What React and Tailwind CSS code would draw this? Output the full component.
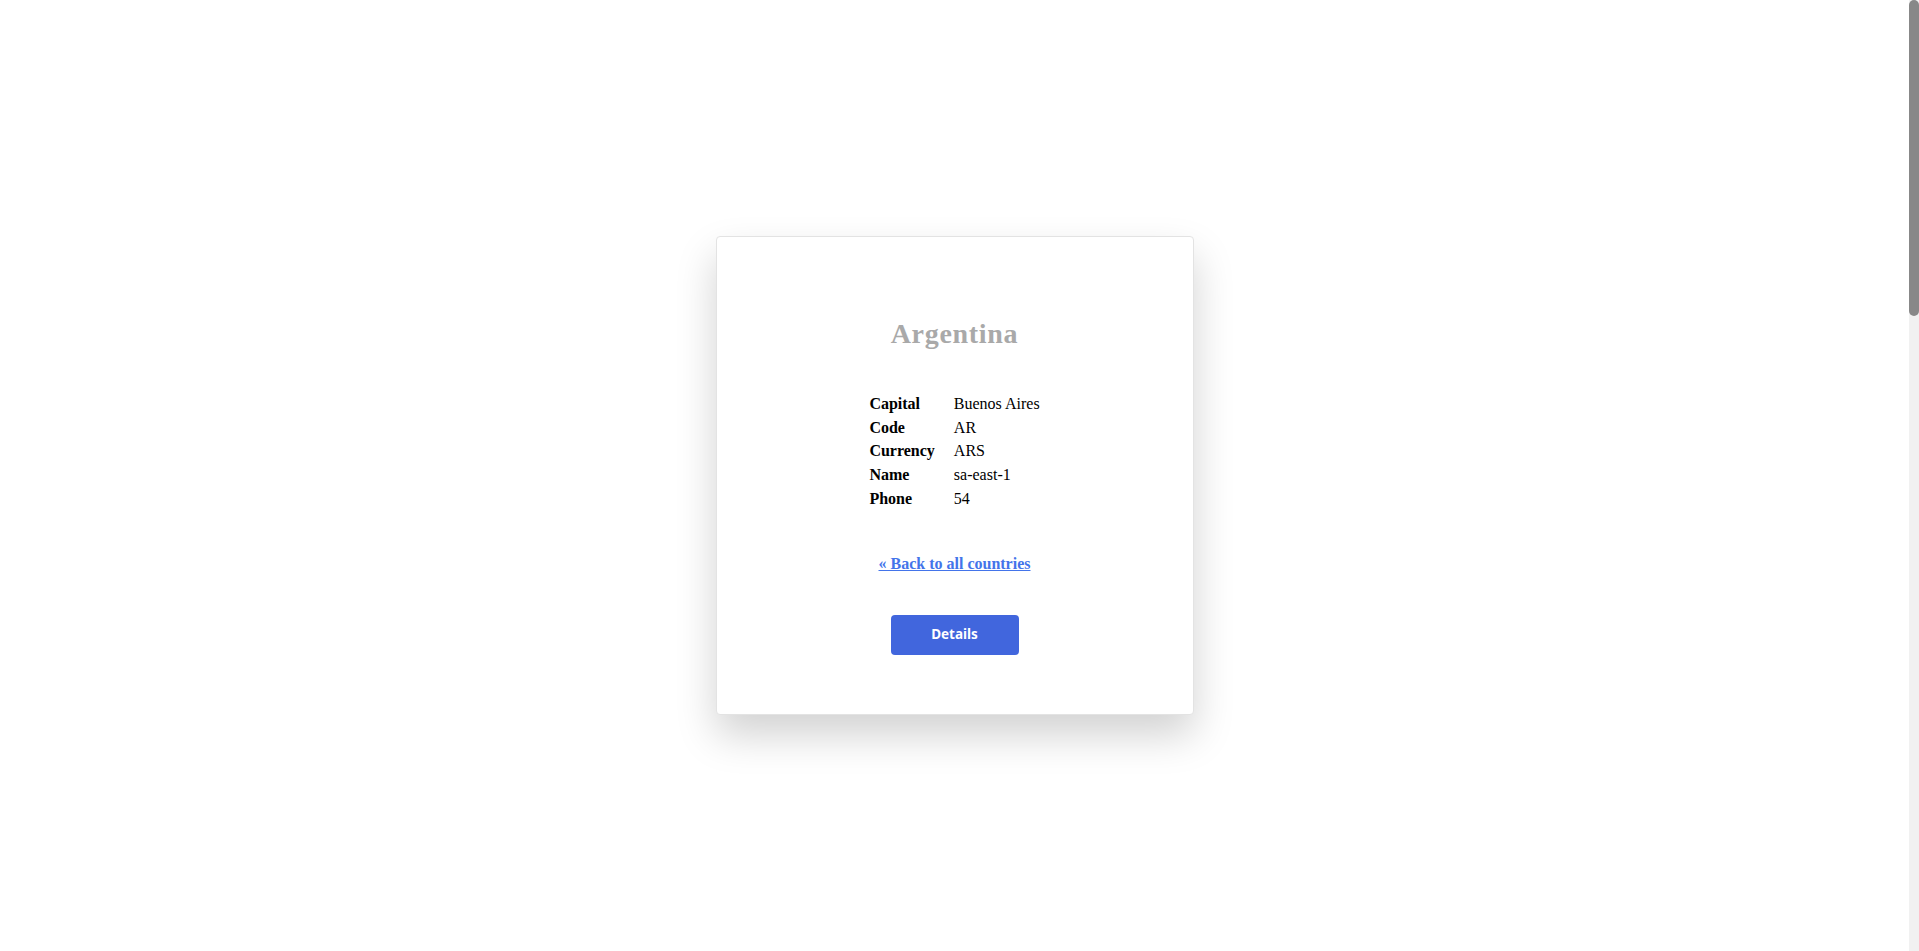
import React from "react";

const rows = [
  ["Capital", "Buenos Aires"],
  ["Code", "AR"],
  ["Currency", "ARS"],
  ["Name", "sa-east-1"],
  ["Phone", "54"],
];

export default function App() {
  return (
    <div className="flex h-[951px] w-full overflow-hidden bg-white">
      <div className="flex flex-1 items-center justify-center">
        <div
          className="flex h-[479px] w-[478px] flex-col items-center rounded-[4px] border border-[#e3e3e3] bg-white pt-[81px] shadow-[0_20px_40px_rgba(0,0,0,0.18)]"
          style={{ fontFamily: '"Liberation Serif", "Times New Roman", serif' }}
        >
          <h2 className="m-0 text-[28px] font-bold leading-[31px] tracking-[0.7px] text-[#a9a9a9]">
            Argentina
          </h2>
          <div className="mt-[43px] grid grid-cols-[auto_auto] gap-x-[19px] text-[16px] leading-[23.7px] text-black">
            {rows.map(([k, v]) => (
              <React.Fragment key={k}>
                <div className="font-bold">{k}</div>
                <div>{v}</div>
              </React.Fragment>
            ))}
          </div>
          <a
            href="#"
            className="mt-[43px] text-[16px] font-bold leading-[20px] text-[#4374ea] underline"
          >
            « Back to all countries
          </a>
          <button
            className="mt-[41px] h-[40px] w-[128px] rounded-[4px] bg-[#4166dd] text-[13.5px] font-bold text-white"
            style={{ fontFamily: '"Noto Sans", "Open Sans", sans-serif' }}
          >
            Details
          </button>
        </div>
      </div>
      <div className="h-full w-[10px] shrink-0 bg-[#f1f1f1]">
        <div className="h-[316px] w-full rounded-[5px] bg-[#888888]" />
      </div>
    </div>
  );
}
